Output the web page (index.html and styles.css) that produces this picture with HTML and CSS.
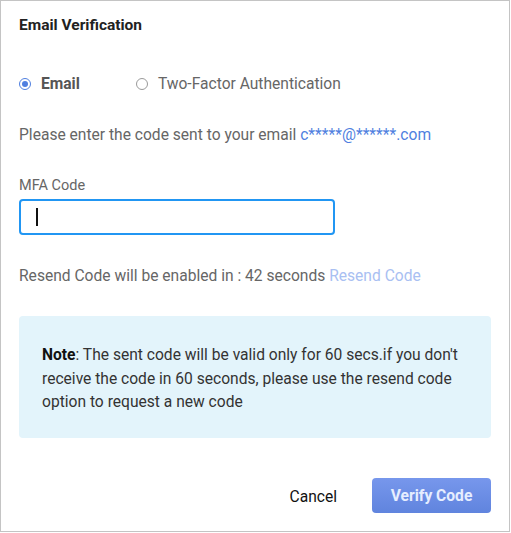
FILE: index.html
```html
<!DOCTYPE html>
<html>
<head>
<meta charset="utf-8">
<link rel="stylesheet" href="styles.css">
</head>
<body>
<div class="dialog">
  <div class="title">Email Verification</div>
  <div class="radios">
    <label class="radio selected"><span class="dot"></span><span class="rlabel">Email</span></label>
    <label class="radio"><span class="dot"></span><span class="rlabel">Two-Factor Authentication</span></label>
  </div>
  <div class="info">Please enter the code sent to your email <span class="email">c*****@******.com</span></div>
  <div class="field-label">MFA Code</div>
  <div class="input"><span class="caret"></span></div>
  <div class="resend">Resend Code will be enabled in : 42 seconds <span class="resend-link">Resend Code</span></div>
  <div class="note"><span class="note-key">Note</span>: The sent code will be valid only for 60 secs.if you don't receive the code in 60 seconds, please use the resend code option to request a new code</div>
  <div class="actions">
    <span class="cancel">Cancel</span>
    <span class="verify">Verify Code</span>
  </div>
</div>
</body>
</html>
```
FILE: styles.css
```css
html, body { margin: 0; padding: 0; background: #fff; }
body { font-family: Roboto, "Noto Sans", sans-serif; }
.dialog {
  width: 510px;
  height: 532px;
  box-sizing: border-box;
  border: 1px solid #c4c4c4;
  padding: 14px 18px 0 18px;
  display: flex;
  flex-direction: column;
}
.title {
  font-size: 15.5px;
  font-weight: 700;
  line-height: 20px;
  color: #222;
}
.radios {
  margin-top: 39px;
  display: flex;
  align-items: center;
  height: 20px;
}
.radio { display: flex; align-items: center; }
.radio + .radio { margin-left: 56px; }
.dot {
  width: 12px;
  height: 12px;
  box-sizing: border-box;
  border: 1px solid #9a9a9a;
  border-radius: 50%;
  position: relative;
  margin-right: 10px;
}
.selected .dot { border-color: #4f7fe0; }
.selected .dot::after {
  content: "";
  position: absolute;
  left: 2px; top: 2px;
  width: 6px; height: 6px;
  border-radius: 50%;
  background: #4f7fe0;
}
.rlabel { font-size: 15.6px; line-height: 20px; color: #666; }
.selected .rlabel { font-weight: 700; color: #555; }
.info {
  margin-top: 31px;
  font-size: 15.6px;
  line-height: 20px;
  color: #666;
}
.email { color: #4f7fe0; }
.field-label {
  margin-top: 32px;
  font-size: 14.5px;
  line-height: 18px;
  color: #666;
}
.input {
  margin-top: 4px;
  width: 316px;
  height: 36px;
  box-sizing: border-box;
  border: 2px solid #2196f3;
  border-radius: 4px;
  display: flex;
  align-items: center;
  padding-left: 15px;
}
.caret { width: 2px; height: 18px; background: #111; }
.resend {
  margin-top: 31px;
  font-size: 15.6px;
  line-height: 20px;
  color: #666;
}
.resend-link { color: #a9c0f2; }
.note {
  margin-top: 30px;
  height: 122px;
  box-sizing: border-box;
  background: #e3f4fb;
  border-radius: 4px;
  padding: 28px 22px 0 23px;
  font-size: 15.6px;
  line-height: 23.5px;
  color: #333;
}
.note-key { font-weight: 700; color: #111; }
.actions {
  margin-top: 40px;
  display: flex;
  justify-content: flex-end;
  align-items: center;
}
.cancel {
  font-size: 15.6px;
  color: #111;
  margin-right: 35px;
  padding-top: 2px;
}
.verify {
  width: 119px;
  height: 35px;
  border-radius: 4px;
  background: linear-gradient(#7797ec, #6084de);
  color: #e6eeff;
  font-size: 15.6px;
  font-weight: 700;
  display: flex;
  align-items: center;
  justify-content: center;
  padding-top: 1px;
  box-sizing: border-box;
}
```
